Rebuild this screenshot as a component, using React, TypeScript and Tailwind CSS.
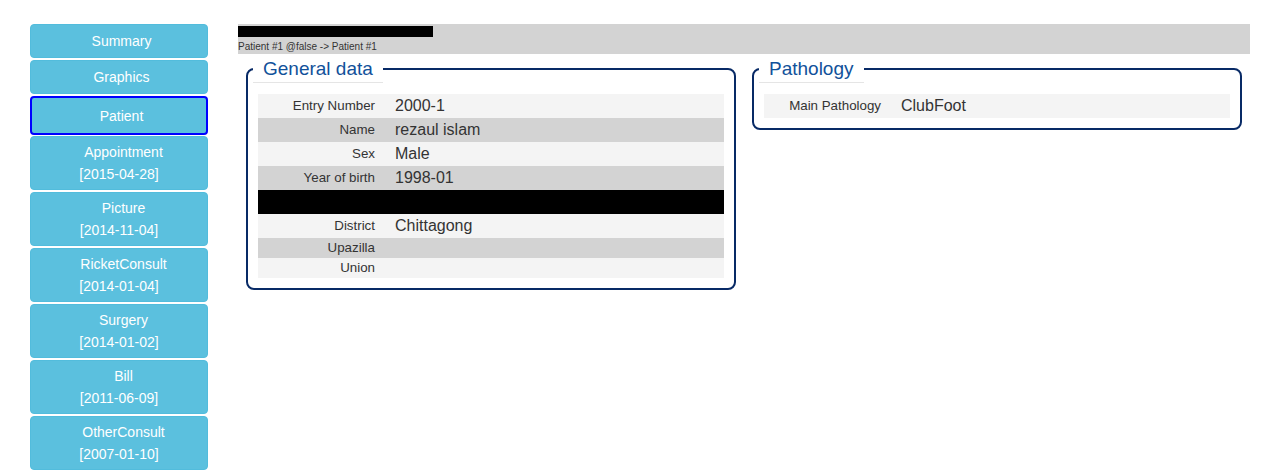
import React from 'react';

const menu: { label: string; date?: string; active?: boolean }[] = [
  { label: 'Summary' },
  { label: 'Graphics' },
  { label: 'Patient', active: true },
  { label: 'Appointment', date: '2015-04-28' },
  { label: 'Picture', date: '2014-11-04' },
  { label: 'RicketConsult', date: '2014-01-04' },
  { label: 'Surgery', date: '2014-01-02' },
  { label: 'Bill', date: '2011-06-09' },
  { label: 'OtherConsult', date: '2007-01-10' },
];

type Row = { label: string; value?: string; redacted?: boolean; small?: boolean; dark?: boolean };

const general: Row[] = [
  { label: 'Entry Number', value: '2000-1' },
  { label: 'Name', value: 'rezaul islam', dark: true },
  { label: 'Sex', value: 'Male' },
  { label: 'Year of birth', value: '1998-01', dark: true },
  { label: '', redacted: true },
  { label: 'District', value: 'Chittagong' },
  { label: 'Upazilla', small: true, dark: true },
  { label: 'Union', small: true },
];

const pathology: Row[] = [{ label: 'Main Pathology', value: 'ClubFoot' }];

function DataTable({ rows }: { rows: Row[] }) {
  return (
    <table className="w-full border-collapse">
      <tbody>
        {rows.map((r, i) => (
          <tr key={i} className={r.redacted ? 'bg-black' : r.dark ? 'bg-[#d3d3d3]' : 'bg-[#f4f4f4]'}>
            <td
              className={`w-[127px] pr-[10px] text-right text-[13.33px] text-[#333] align-middle ${
                r.small ? 'h-[20px]' : 'h-[24px]'
              }`}
            >
              {r.label}
            </td>
            <td className="pl-[10px] text-[16px] text-[#333] align-middle">{r.value}</td>
          </tr>
        ))}
      </tbody>
    </table>
  );
}

function Panel({ title, rows }: { title: string; rows: Row[] }) {
  return (
    <fieldset className="self-start border-2 border-[#082a66] rounded-[8px] px-[10px] pt-[11px] pb-[10px]">
      <legend className="ml-[-5px] px-[10px] text-[19px] leading-[27px] text-[#11519a] border-b border-[#e5e5e5]">
        {title}
      </legend>
      <DataTable rows={rows} />
    </fieldset>
  );
}

export default function App() {
  return (
    <div className="flex gap-[30px] px-[30px] pt-[24px] h-[470px] overflow-hidden bg-white font-['Liberation_Sans',Arial,sans-serif]">
      {/* sidebar */}
      <div className="w-[178px] shrink-0 flex flex-col gap-[2px]">
        {menu.map((m) => (
          <div
            key={m.label}
            className={`flex flex-col items-center justify-center rounded-[4px] bg-[#5bc0de] text-white text-[14px] leading-[22px] ${
              m.active ? 'h-[39px] mb-[-1px] border-2 border-[#0000ff]' : 'border border-[#52bcdc]'
            } ${!m.active && m.date ? 'h-[54px]' : ''} ${!m.active && !m.date ? 'h-[34px]' : ''}`}
          >
            <span className={m.date ? 'pl-[9px]' : 'pl-[5px]'}>{m.label}</span>
            {m.date && <span>[{m.date}]</span>}
          </div>
        ))}
      </div>

      {/* main */}
      <div className="flex-1 min-w-0">
        <div className="bg-[#d3d3d3] h-[30px] pt-[2px]">
          <div className="w-[195px] h-[11px] bg-black" />
          <div className="text-[10px] leading-[14px] text-[#333] mt-[3px]">Patient #1 @false -&gt; Patient #1</div>
        </div>
        <div className="grid grid-cols-2 gap-[16px] px-[8px] mt-[1px]">
          <Panel title="General data" rows={general} />
          <Panel title="Pathology" rows={pathology} />
        </div>
      </div>
    </div>
  );
}
